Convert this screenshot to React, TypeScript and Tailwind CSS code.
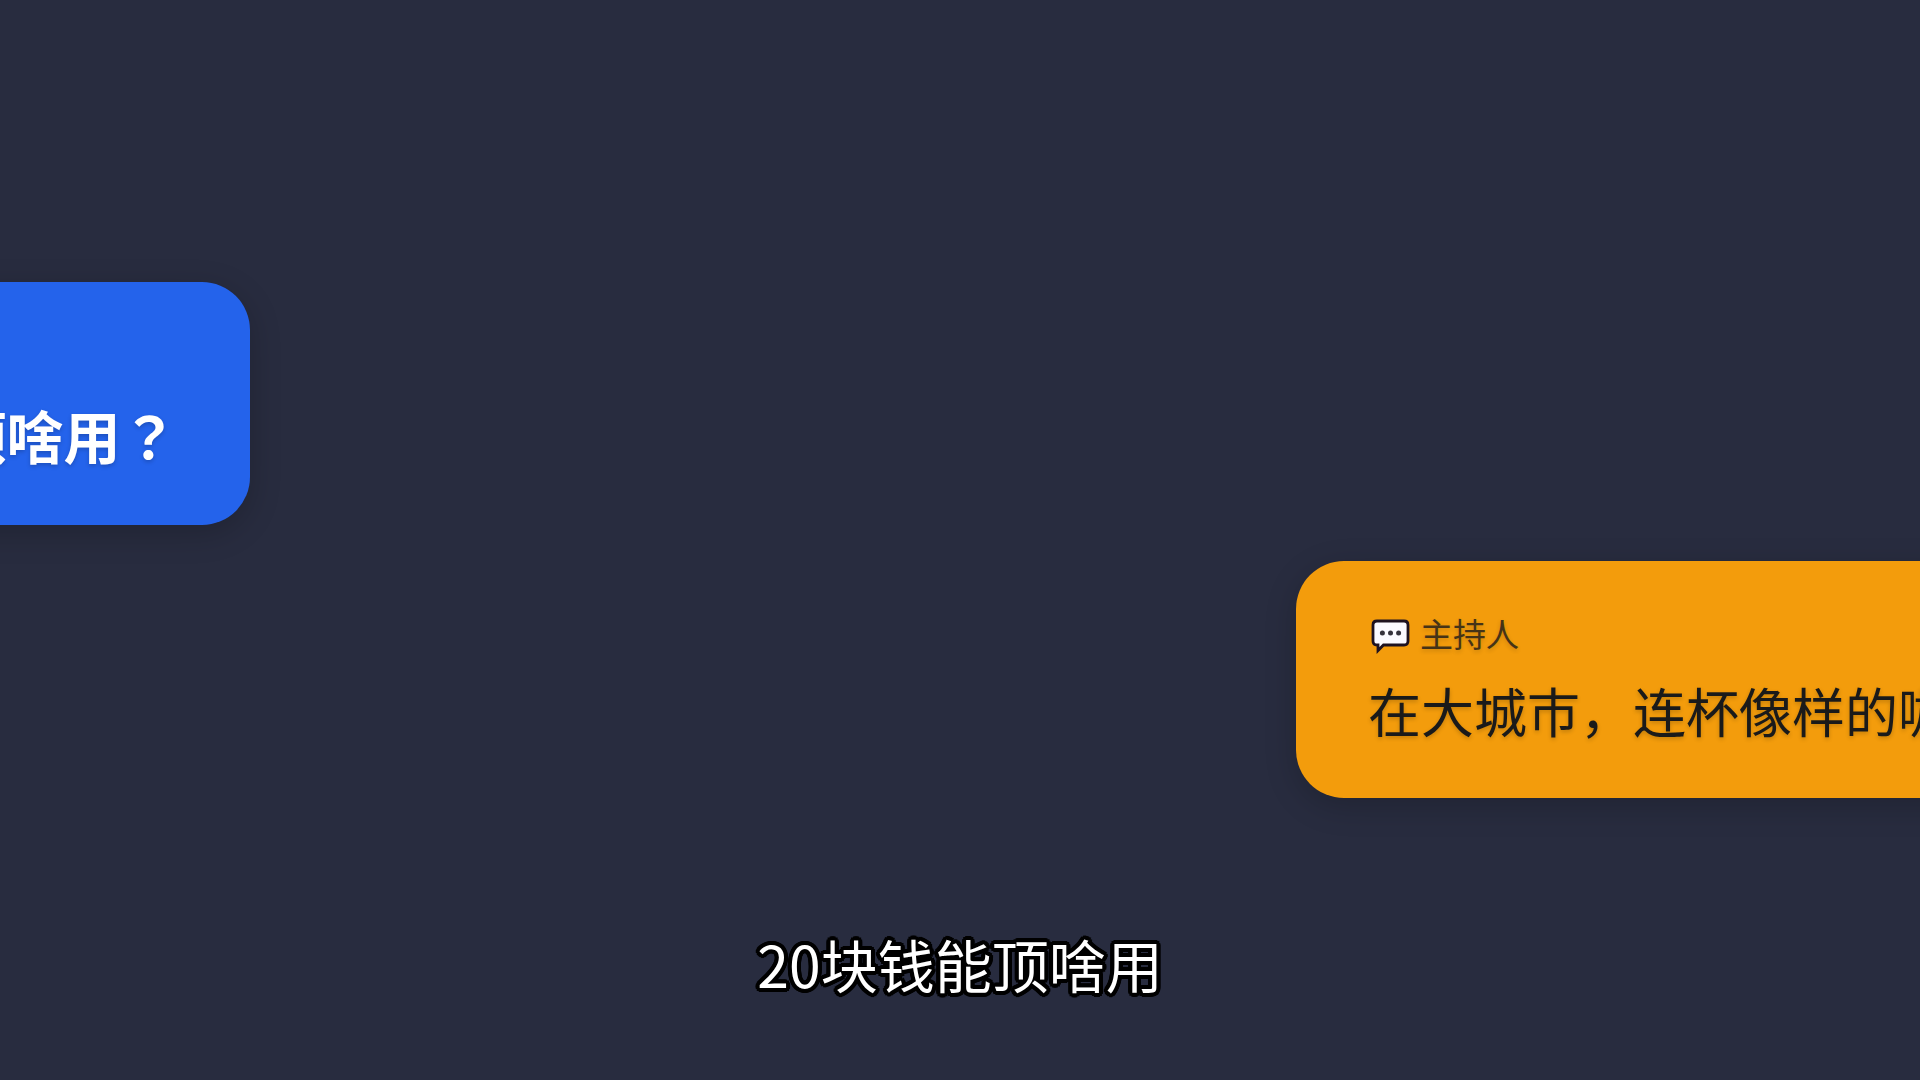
import React from "react";

const ChatIcon: React.FC = () => {
  return (
    <svg
      width="44"
      height="40"
      viewBox="0 -2 44 40"
      fill="none"
      xmlns="http://www.w3.org/2000/svg"
      aria-hidden="true"
    >
      <path
        d="M9 5H36C38.4 5 40 6.6 40 9V25C40 27.4 38.4 29 36 29H15.5L10 34.6V29H9C6.6 29 5 27.4 5 25V9C5 6.6 6.6 5 9 5Z"
        fill="#FBFAFF"
        stroke="#1E1220"
        strokeWidth="2.8"
      />
      <circle cx="14.4" cy="17" r="2.5" fill="#35323C" />
      <circle cx="22.5" cy="17" r="2.5" fill="#35323C" />
      <circle cx="30.6" cy="17" r="2.5" fill="#35323C" />
    </svg>
  );
};

interface BubbleProps {
  className: string;
  speaker?: string;
  children: React.ReactNode;
}

const Bubble: React.FC<BubbleProps> = ({ className, speaker, children }) => {
  return (
    <article
      className={`w-max shrink-0 rounded-[48px] px-[72px] pt-[47px] pb-[49px] font-['Noto_Sans_CJK_JP',sans-serif] whitespace-nowrap shadow-[0_8px_32px_rgba(0,0,0,0.2)] text-shadow-[0_2px_4px_rgba(0,0,0,0.2)] ${className}`}
    >
      <header className="mb-3 flex h-[51px] items-center gap-2 text-[33px] leading-[51px]">
        {speaker && (
          <>
            <ChatIcon />
            <span className="opacity-80">{speaker}</span>
          </>
        )}
      </header>
      {children}
    </article>
  );
};

const App: React.FC = () => {
  return (
    <main className="relative flex min-h-screen flex-col justify-center gap-9 overflow-hidden bg-[#282c3f] font-['Noto_Sans_CJK_SC',sans-serif]">
      <div className="flex w-[13%] justify-end">
        <Bubble className="bg-[#2463eb] text-white">
          <p className="text-[57px] leading-[84px] font-bold">
            20块钱能顶啥用？
          </p>
        </Bubble>
      </div>
      <div className="ml-[67.5%] flex">
        <Bubble className="bg-[#f39c0c] text-[#1a1a1a]" speaker="主持人">
          <p className="text-[53px] leading-[78px]">在大城市，连杯像样的咖啡</p>
        </Bubble>
      </div>
      <p className="absolute inset-x-0 bottom-[75px] text-center text-[57px] leading-[84px] text-white [text-shadow:4px_0_#000,-4px_0_#000,0_4px_#000,0_-4px_#000,4px_1px_#000,4px_-1px_#000,-4px_1px_#000,-4px_-1px_#000,1px_4px_#000,-1px_4px_#000,1px_-4px_#000,-1px_-4px_#000,3px_3px_#000,-3px_3px_#000,3px_-3px_#000,-3px_-3px_#000,2px_0_#000,-2px_0_#000,0_2px_#000,0_-2px_#000]">
        20块钱能顶啥用
      </p>
    </main>
  );
};

export default App;
